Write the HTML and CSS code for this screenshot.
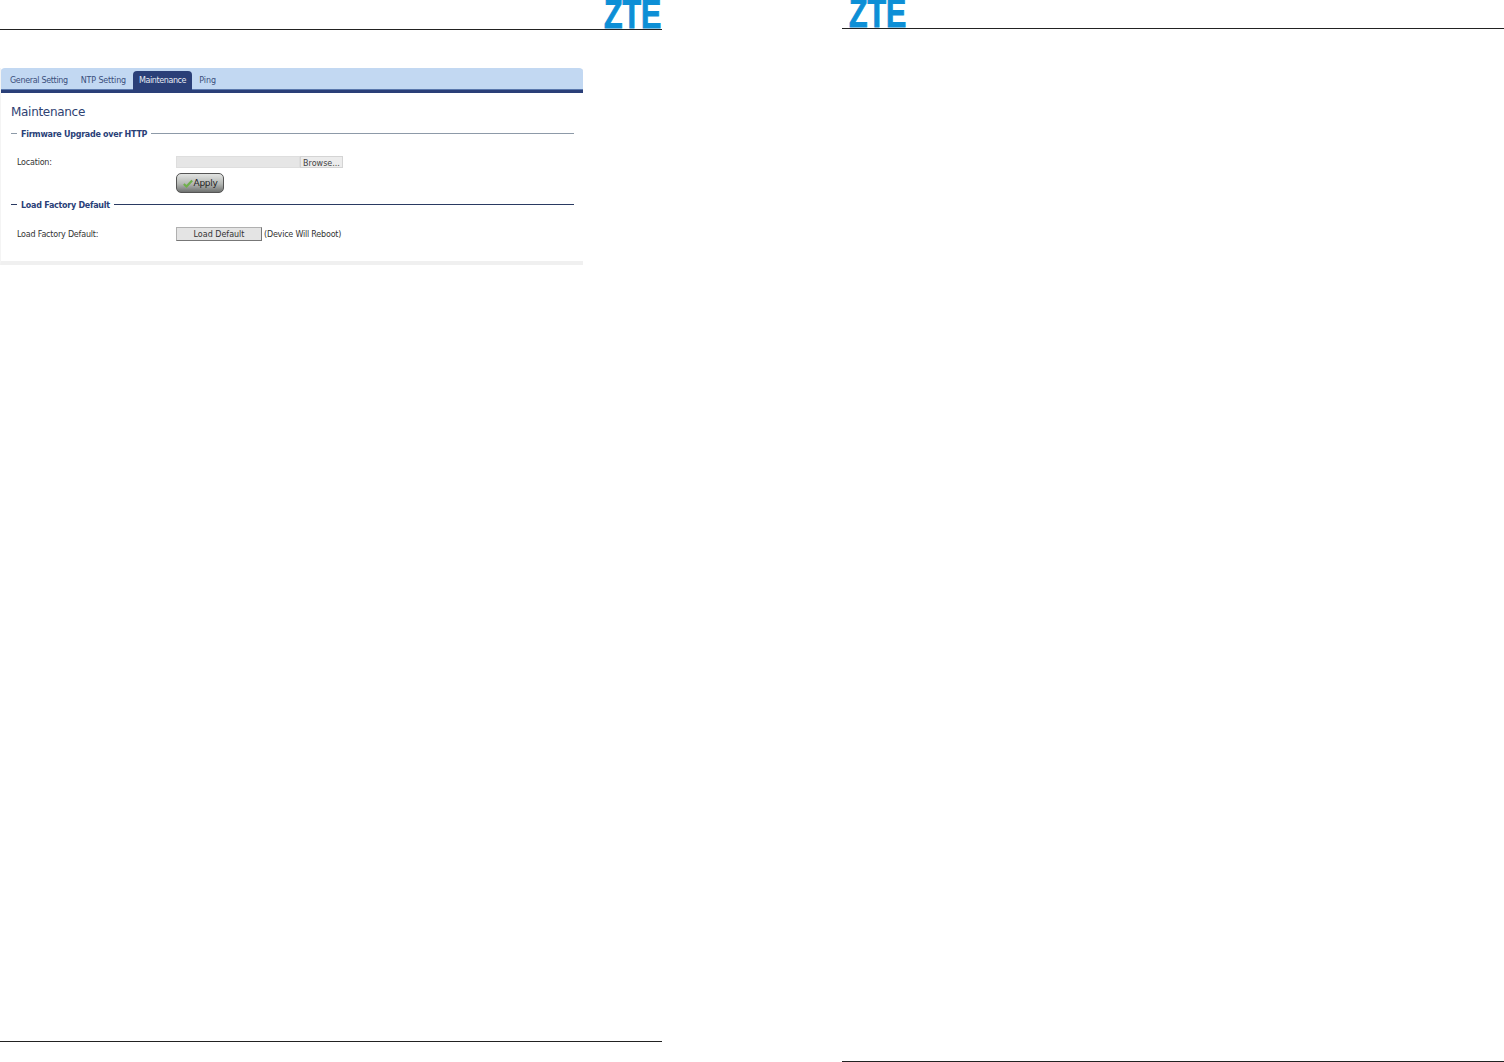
FILE: index.html
```html
<!DOCTYPE html>
<html lang="en">
<head>
<meta charset="utf-8">
<title>Maintenance</title>
<link rel="stylesheet" href="styles.css">
</head>
<body>
<div class="spread">
  <section class="page page-left">
    <header class="page-head head-left"><span class="logo">ZTE</span></header>
    <main class="page-body">
      <div class="panel">
        <nav class="tabs">
          <a class="tab">General Setting</a>
          <a class="tab tab-ntp">NTP Setting</a>
          <a class="tab tab-active">Maintenance</a>
          <a class="tab tab-ping">Ping</a>
        </nav>
        <div class="panel-body">
          <h1 class="title">Maintenance</h1>
          <div class="legend legend-grey"><span class="dash"></span><span class="legend-text">Firmware Upgrade over HTTP</span><span class="rule"></span></div>
          <div class="row row-location">
            <label class="label">Location:</label>
            <div class="file"><span class="file-path"></span><span class="browse">Browse...</span></div>
          </div>
          <div class="row row-apply">
            <span class="label"></span>
            <button class="apply" type="button">
              <svg class="check" viewBox="0 0 12 10" width="10" height="9"><path d="M1 5.5 L4.2 8.6 L11 1.4" fill="none" stroke="#6fb04c" stroke-width="2.6"/></svg>Apply</button>
          </div>
          <div class="legend legend-navy"><span class="dash"></span><span class="legend-text">Load Factory Default</span><span class="rule"></span></div>
          <div class="row row-load">
            <label class="label">Load Factory Default:</label>
            <button class="load" type="button">Load Default</button>
            <span class="note">(Device Will Reboot)</span>
          </div>
        </div>
      </div>
    </main>
    <footer class="page-foot"></footer>
  </section>
  <section class="page page-right">
    <header class="page-head head-right"><span class="logo">ZTE</span></header>
    <main class="page-body"></main>
    <footer class="page-foot"></footer>
  </section>
</div>
</body>
</html>
```
FILE: styles.css
```css
* { box-sizing: border-box; }
html, body { margin: 0; padding: 0; background: #fff; }
body { font-family: "DejaVu Sans", sans-serif; color: #333; overflow: hidden; }

.spread {
  display: grid;
  grid-template-columns: 662px 662px;
  justify-content: space-between;
  align-items: start;
  width: 1504px;
  height: 1062px;
}
.page { display: flex; flex-direction: column; }
.page-left { height: 1042px; }
.page-right { height: 1062px; }
.page-body { flex: 1; }
.page-foot { border-bottom: 1px solid #222; height: 1px; }

.page-head {
  display: flex;
  align-items: flex-end;
  border-bottom: 1px solid #222;
}
.head-left { height: 30px; justify-content: flex-end; }
.head-right { height: 29px; padding-left: 7px; }

.logo {
  display: block;
  width: 58px;
  height: 29px;
  font: 700 41px/29px "Liberation Sans", sans-serif;
  color: #0d8fd6;
  -webkit-text-stroke: 1px #0d8fd6;
  white-space: nowrap;
  transform: scaleX(0.74);
  transform-origin: 0 50%;
}

.page-body { padding-top: 38px; }
.panel { width: 583px; height: 197px; background: #fff; border-bottom: 4px solid #f0f0f0; border-left: 1px solid #f4f4f4; }

.tabs {
  display: flex;
  align-items: flex-end;
  gap: 1px;
  height: 25px;
  padding-left: 3px;
  background: #c2d8f2;
  border-bottom: 3px solid #2a3f78;
  border-radius: 4px 4px 0 0;
  box-shadow: inset 0 -1px #5a78ad;
}
.tab {
  display: block;
  height: 19px;
  padding: 0 6px;
  font-size: 8px;
  letter-spacing: -0.33px;
  line-height: 20px;
  color: #3b4f7c;
  white-space: nowrap;
}
.tab-ntp { letter-spacing: -0.15px; }
.tab-ping { letter-spacing: 0; }
.tab-active { background: #2a3f78; color: #e6ebf5; border-radius: 4px 4px 0 0; letter-spacing: -0.4px; }

.panel-body { padding: 11px 9px 0 10px; }
.title { margin: 0; font-size: 12px; letter-spacing: -0.3px; line-height: 16px; font-weight: 400; color: #2f4272; }

.legend { display: flex; align-items: center; height: 14px; font-size: 8px; font-weight: 700; letter-spacing: -0.27px; color: #2a3f78; }
.dash { width: 6px; height: 1px; margin-right: 4px; background: currentColor; }
.legend-text { white-space: nowrap; margin-right: 4px; padding-top: 2px; }
.rule { flex: 1; height: 1px; background: currentColor; }
.legend-grey { margin-top: 6px; }
.legend-grey .dash, .legend-grey .rule { background: #8d9aa8; }
.legend-navy { margin-top: 4px; }
.legend-navy .dash, .legend-navy .rule { background: #2a3a62; }

.row { display: flex; align-items: center; font-size: 8px; letter-spacing: -0.2px; color: #333; }
.label { width: 159px; margin-left: 6px; flex: none; white-space: nowrap; }
.row-location { margin-top: 16px; height: 12px; }
.row-apply { margin-top: 5px; height: 20px; }
.row-load { margin-top: 16px; height: 14px; }

.file { display: flex; height: 12px; width: 167px; }
.file-path { width: 124px; background: #e6e6e6; border: 1px solid #dedede; }
.browse { width: 43px; background: #ececec; border: 1px solid #d4d4d4; line-height: 13px; text-align: center; font-size: 8px; letter-spacing: 0; color: #444; }

.apply {
  display: flex;
  align-items: center;
  justify-content: center;
  gap: 1px;
  width: 48px;
  height: 20px;
  padding: 0;
  font: 400 9px "DejaVu Sans", sans-serif;
  letter-spacing: -0.3px;
  color: #222;
  background: linear-gradient(#e2e4e2, #b4b7b4 55%, #6f7270);
  border: 1px solid #555;
  border-radius: 5px;
}
.check { flex: none; }

.load {
  width: 86px;
  height: 14px;
  padding: 1px 0 0;
  font: 400 8px/12px "DejaVu Sans", sans-serif;
  color: #333;
  background: #e4e4e4;
  border: 1px solid #b0b0b0;
  border-right-color: #777;
  border-bottom-color: #777;
}
.note { margin-left: 2px; white-space: nowrap; }
```
